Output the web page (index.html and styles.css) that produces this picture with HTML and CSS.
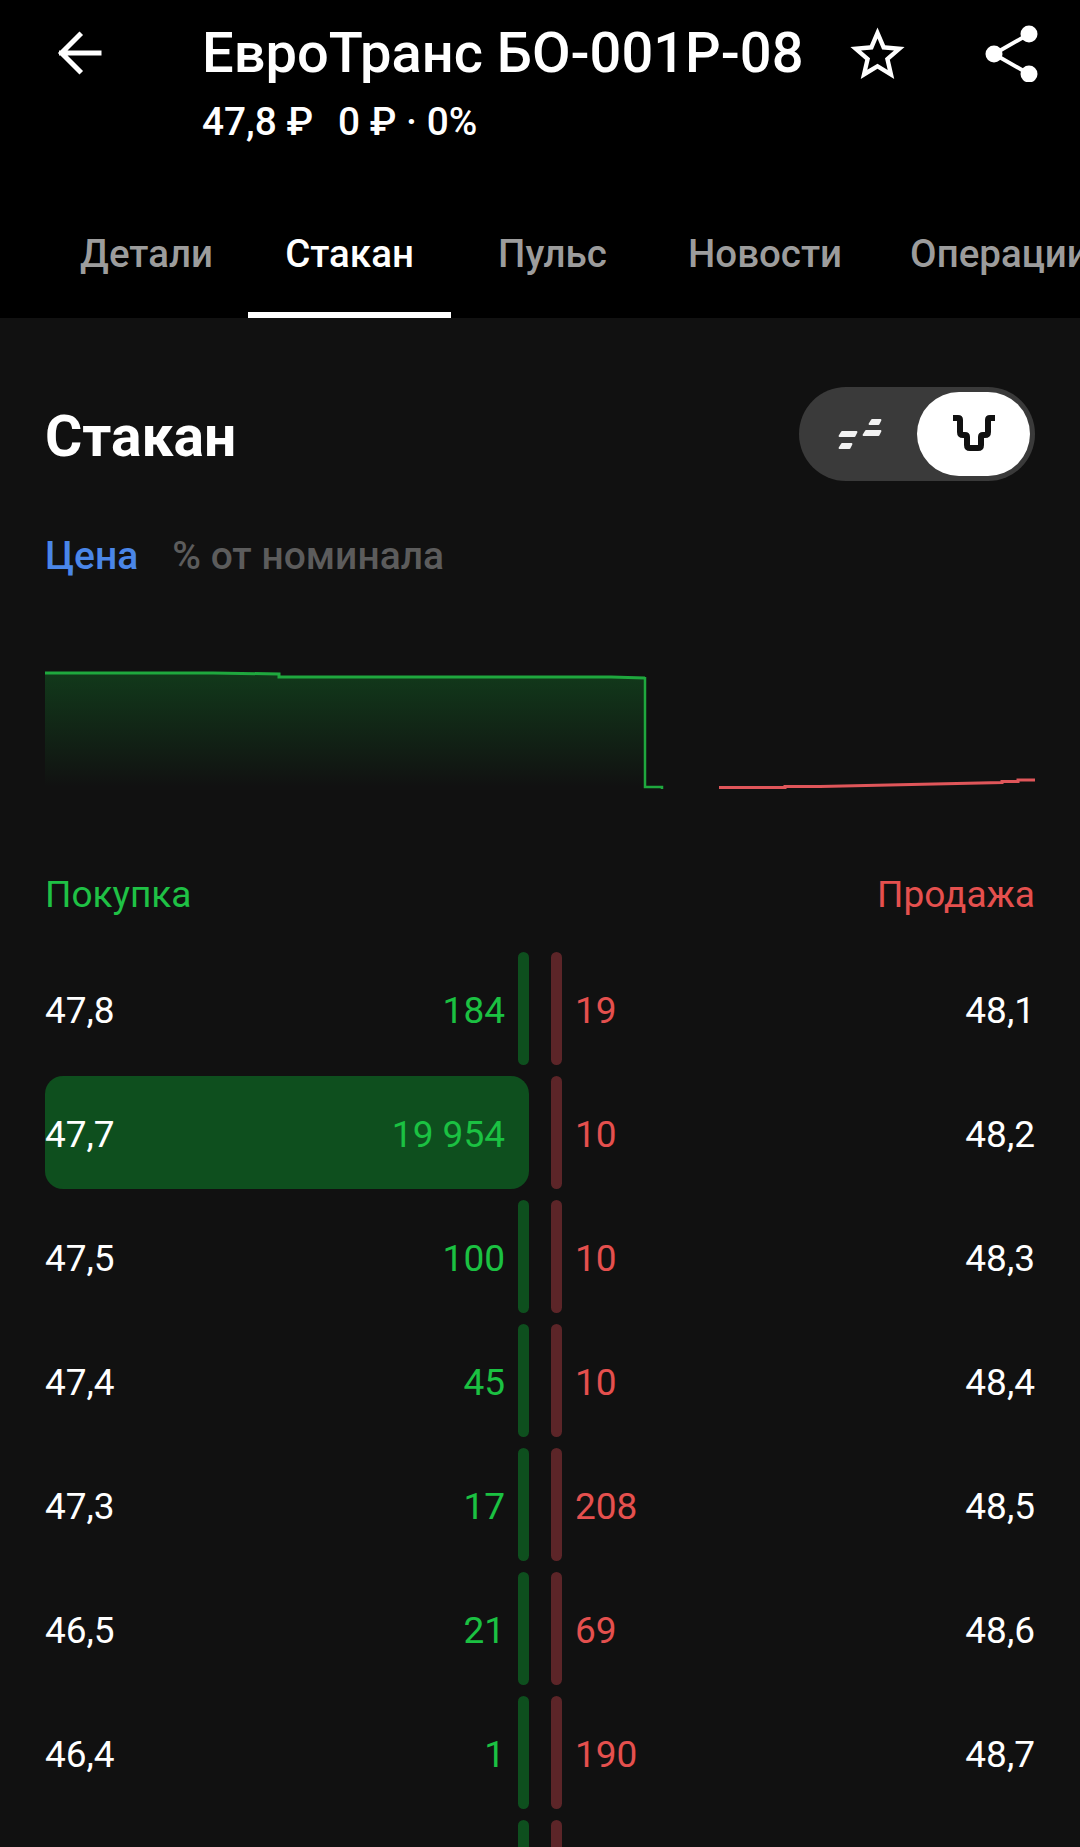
FILE: index.html
```html
<!DOCTYPE html>
<html lang="ru">

<head>
    <title>Стакан</title>
    <meta charset="utf-8">
    <meta name="viewport" content="width=device-width, initial-scale=1">
    <link rel="stylesheet" href="styles.css">
</head>

<body>

    <header class="header">
        <div class="topbar">
            <svg class="icon-back" width="60" height="60" viewBox="0 0 60 60">
                <path d="M49 31H11.500M29.500 13L11.500 31l18 18" fill="none" stroke="#fff" stroke-width="5" stroke-linecap="square"/>
            </svg>
            <div class="instrument">
                <h1>ЕвроТранс БО-001Р-08</h1>
                <p><span class="last-price">47,8 ₽</span>0 ₽ · 0%</p>
            </div>
            <div class="actions">
                <svg width="65" height="65" viewBox="0 0 24 24">
                    <path fill="#fff" d="M22 9.24l-7.19-.62L12 2 9.19 8.63 2 9.24l5.46 4.73L5.82 21 12 17.27 18.18 21l-1.63-7.03L22 9.24zM12 15.4l-3.76 2.27 1-4.28-3.32-2.88 4.38-.38L12 6.1l1.71 4.04 4.38.38-3.32 2.88 1 4.28L12 15.4z"/>
                </svg>
                <svg width="60" height="60" viewBox="0 0 60 60">
                    <path d="M44 12L9 32l35 20" fill="none" stroke="#fff" stroke-width="4"/>
                    <circle cx="44" cy="12" r="8.5" fill="#fff"/>
                    <circle cx="9" cy="32" r="8.5" fill="#fff"/>
                    <circle cx="44" cy="52" r="8.5" fill="#fff"/>
                </svg>
            </div>
        </div>
        <nav class="tabs">
            <a class="tab">Детали</a>
            <a class="tab active">Стакан</a>
            <a class="tab">Пульс</a>
            <a class="tab">Новости</a>
            <a class="tab">Операции</a>
        </nav>
    </header>

    <main class="panel">

        <section class="panel-head">
            <h2>Стакан</h2>
            <div class="switch">
                <span class="switch-off">
                    <svg width="48" height="32" viewBox="0 0 48 32">
                        <path d="M8 14H22.500L20.500 18H5.500ZM8 26H17.500L15.500 30H5.500ZM32 13H46.500L44.500 17H29.500ZM38 2H46.500L44.500 6H35.500Z" fill="#f2f2f2" stroke="#f2f2f2" stroke-width="1.8" stroke-linejoin="round"/>
                    </svg>
                </span>
                <span class="switch-on">
                    <svg width="44" height="38" viewBox="0 0 44 38">
                        <path d="M1 3H6Q8 3 8 5V17Q8 20 11 20H13Q15 20 15 22V30Q15 33 18 33H26Q29 33 29 30V22Q29 20 31 20H33Q36 20 36 17V5Q36 3 38 3H43" fill="none" stroke="#111" stroke-width="6"/>
                    </svg>
                </span>
            </div>
        </section>

        <div class="units">
            <span class="unit active">Цена</span>
            <span class="unit">% от номинала</span>
        </div>

        <svg class="depth" width="990" height="140" viewBox="0 0 990 140">
            <defs>
                <linearGradient id="bid-fill" x1="0" y1="0" x2="0" y2="1">
                    <stop offset="0" stop-color="#128a2e" stop-opacity="0.33"/>
                    <stop offset="1" stop-color="#128a2e" stop-opacity="0"/>
                </linearGradient>
            </defs>
            <path d="M0 13H168L234 14V17H566L600 18V127H0Z" fill="url(#bid-fill)"/>
            <path d="M0 13H168L234 14V17H566L600 18" fill="none" stroke="#1fa83e" stroke-width="3"/>
            <path d="M600 17V127H617V129" fill="none" stroke="#1fa83e" stroke-width="2.5"/>
            <path d="M674 127.500H740V126.500H775L957 122.500V121.500H973V120H990" fill="none" stroke="#e0565a" stroke-width="3"/>
        </svg>

        <div class="sides">
            <span class="buy">Покупка</span>
            <span class="sell">Продажа</span>
        </div>

        <div class="book">
            <div class="row">
                <div class="bid"><span class="price">47,8</span><span class="qty">184</span><i class="bar"></i></div>
                <div class="ask"><i class="bar"></i><span class="qty">19</span><span class="price">48,1</span></div>
            </div>
            <div class="row">
                <div class="bid wall"><span class="price">47,7</span><span class="qty">19 954</span><i class="bar"></i></div>
                <div class="ask"><i class="bar"></i><span class="qty">10</span><span class="price">48,2</span></div>
            </div>
            <div class="row">
                <div class="bid"><span class="price">47,5</span><span class="qty">100</span><i class="bar"></i></div>
                <div class="ask"><i class="bar"></i><span class="qty">10</span><span class="price">48,3</span></div>
            </div>
            <div class="row">
                <div class="bid"><span class="price">47,4</span><span class="qty">45</span><i class="bar"></i></div>
                <div class="ask"><i class="bar"></i><span class="qty">10</span><span class="price">48,4</span></div>
            </div>
            <div class="row">
                <div class="bid"><span class="price">47,3</span><span class="qty">17</span><i class="bar"></i></div>
                <div class="ask"><i class="bar"></i><span class="qty">208</span><span class="price">48,5</span></div>
            </div>
            <div class="row">
                <div class="bid"><span class="price">46,5</span><span class="qty">21</span><i class="bar"></i></div>
                <div class="ask"><i class="bar"></i><span class="qty">69</span><span class="price">48,6</span></div>
            </div>
            <div class="row">
                <div class="bid"><span class="price">46,4</span><span class="qty">1</span><i class="bar"></i></div>
                <div class="ask"><i class="bar"></i><span class="qty">190</span><span class="price">48,7</span></div>
            </div>
            <div class="row">
                <div class="bid"><i class="bar"></i></div>
                <div class="ask"><i class="bar"></i></div>
            </div>
        </div>

    </main>

</body>

</html>
```

FILE: styles.css
```css
html,
body {
    height: 1847px;
    overflow: hidden;
}

body {
    background-color: #111;
    color: #fff;
    font-family: Roboto, "Noto Sans", sans-serif;
    margin: 0;
}

h1,
h2,
p {
    margin: 0;
}

.header {
    background-color: #000;
    display: flex;
    flex-direction: column;
    height: 318px;
}

.topbar {
    display: flex;
    padding: 22px 35px 0 50px;
}

.icon-back {
    margin: 0 92px 0 0;
}

.instrument h1 {
    font-size: 56px;
    font-weight: 500;
    line-height: 60px;
    margin: 1px 0 0 0;
    white-space: nowrap;
}

.instrument p {
    font-size: 38.8px;
    font-weight: 500;
    line-height: 44px;
    margin: 17px 0 0 0;
}

.last-price {
    margin: 0 25px 0 0;
}

.actions {
    display: flex;
    gap: 75px;
    margin: 0 0 0 auto;
}

.tabs {
    display: flex;
    margin: auto 0 0 0;
    overflow: hidden;
    padding: 0 0 0 45px;
}

.tab {
    border-bottom: 6px solid transparent;
    box-sizing: border-box;
    color: #9c9c9c;
    flex-shrink: 0;
    font-size: 38.5px;
    font-weight: 500;
    line-height: 44px;
    min-width: 203px;
    padding: 0 34px 36px 34px;
    text-align: center;
    white-space: nowrap;
}

.tab.active {
    border-bottom-color: #fff;
    color: #fff;
}

.panel {
    padding: 69px 45px 0 45px;
}

.panel-head {
    align-items: center;
    display: flex;
    justify-content: space-between;
}

.panel-head h2 {
    font-size: 57px;
    font-weight: 700;
    padding: 4px 0 0 0;
}

.switch {
    align-items: center;
    background-color: #3a3a3a;
    border-radius: 47px;
    box-sizing: border-box;
    display: flex;
    height: 94px;
    justify-content: space-between;
    padding: 0 5px 0 0;
    width: 236px;
}

.switch-off {
    display: flex;
    justify-content: center;
    width: 118px;
}

.switch-on {
    align-items: center;
    background-color: #fff;
    border-radius: 42px;
    display: flex;
    height: 84px;
    justify-content: center;
    width: 113px;
}

.units {
    display: flex;
    font-size: 39px;
    font-weight: 500;
    gap: 34px;
    line-height: 44px;
    margin: 53px 0 0 0;
}

.unit {
    color: #5c5c5c;
}

.unit.active {
    color: #4a86e8;
}

.depth {
    display: block;
    margin: 82px 0 0 0;
}

.sides {
    display: flex;
    font-size: 37px;
    justify-content: space-between;
    line-height: 40px;
    margin: 75px 0 0 0;
}

.buy {
    color: #1fc145;
}

.sell {
    color: #e5504e;
}

.book {
    display: flex;
    flex-direction: column;
    gap: 11px;
    margin: 37px 0 0 0;
}

.row {
    display: flex;
    flex-shrink: 0;
    font-size: 37px;
    gap: 22px;
    height: 113px;
}

.bid,
.ask {
    align-items: stretch;
    display: flex;
    gap: 13px;
    line-height: 118px;
}

.bid {
    width: 484px;
}

.ask {
    flex: 1;
}

.bid .qty {
    color: #1bc142;
    margin: 0 0 0 auto;
}

.ask .qty {
    color: #e5504e;
}

.ask .price {
    margin: 0 0 0 auto;
}

.bar {
    border-radius: 6px;
    width: 11px;
}

.bid .bar {
    background-color: #0e4f1e;
    margin: 0 0 0 auto;
}

.bid .qty + .bar {
    margin: 0;
}

.ask .bar {
    background-color: #5c2528;
}

.wall {
    background-color: #0e4f1e;
    border-radius: 18px;
}

.wall .bar {
    background-color: transparent;
}
```
